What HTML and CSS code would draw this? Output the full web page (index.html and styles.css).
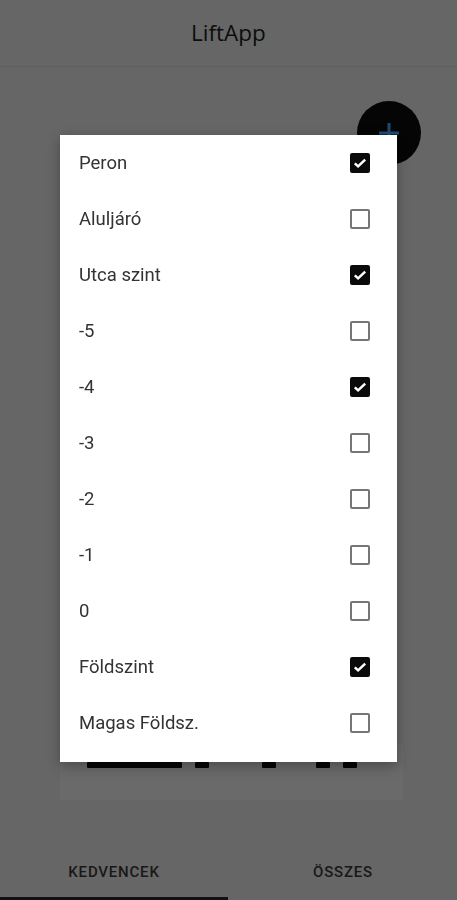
FILE: index.html
```html
<!DOCTYPE html>
<html>

<head>
    <title>LiftApp</title>
    <link rel="stylesheet" href="styles.css">
</head>

<body>

    <div class="topbar">
        <h1>LiftApp</h1>
    </div>

    <div class="content">
        <div class="fab">
            <svg width="22" height="22" viewBox="0 0 22 22">
                <path d="M11 1v20M1 11h20" stroke="#204a72" stroke-width="3" fill="none"/>
            </svg>
        </div>
        <div class="card">
            <div class="bars">
                <span class="bar wide"></span>
                <span class="bar gap1"></span>
                <span class="bar gap2"></span>
                <span class="bar gap3"></span>
                <span class="bar gap4"></span>
            </div>
        </div>
    </div>

    <div class="tabs">
        <div class="tab active">Kedvencek</div>
        <div class="tab">Összes</div>
    </div>

    <div class="dialog">
        <ul id="levelList"></ul>
    </div>

    <script>
        (function () {
            var levels = [
                { name: "Peron", checked: true },
                { name: "Aluljáró", checked: false },
                { name: "Utca szint", checked: true },
                { name: "-5", checked: false },
                { name: "-4", checked: true },
                { name: "-3", checked: false },
                { name: "-2", checked: false },
                { name: "-1", checked: false },
                { name: "0", checked: false },
                { name: "Földszint", checked: true },
                { name: "Magas Földsz.", checked: false }
            ];
            var list = document.getElementById("levelList");
            for (var i = 0; i < levels.length; i++) {
                var li = document.createElement("li");
                var label = document.createElement("span");
                label.className = "label";
                label.textContent = levels[i].name;
                var box = document.createElement("span");
                box.className = levels[i].checked ? "box checked" : "box";
                if (levels[i].checked) {
                    box.innerHTML = '<svg width="16" height="16" viewBox="0 0 16 16"><path d="M2.8 8.3l3.3 3.1L13.2 4.6" stroke="#fff" stroke-width="2.5" fill="none"/></svg>';
                }
                li.appendChild(label);
                li.appendChild(box);
                list.appendChild(li);
            }
        }());
    </script>
</body>

</html>
```

FILE: styles.css
```css
* {
    list-style: none;
    margin: 0;
    padding: 0;
    box-sizing: border-box;
    font-family: Roboto, 'Noto Sans', sans-serif;
}

body {
    background: #666666;
    width: 457px;
    height: 900px;
    display: flex;
    flex-direction: column;
    overflow: hidden;
}

.topbar {
    height: 67px;
    border-bottom: 1px solid #5f5f5f;
    display: flex;
    align-items: center;
    justify-content: center;
}

.topbar h1 {
    font-family: 'Open Sans', sans-serif;
    font-weight: 500;
    font-size: 22.5px;
    color: #0d0d0d;
    margin-bottom: 2px;
}

.content {
    flex: 1;
    position: relative;
    padding-top: 677px;
}

.fab {
    position: absolute;
    left: 357px;
    top: 34px;
    width: 64px;
    height: 64px;
    border-radius: 50%;
    background: #050505;
    display: flex;
    align-items: center;
    justify-content: center;
}

.card {
    margin: 0 54px 0 60px;
    height: 56px;
    background: #6a6a6a;
    padding-top: 18px;
}

.bars {
    display: flex;
    padding-left: 27px;
}

.bar {
    height: 6px;
    width: 14px;
    background: #050505;
    border-radius: 1px;
}

.bar.wide {
    width: 95px;
}

.bar.gap1 {
    margin-left: 13px;
}

.bar.gap2 {
    margin-left: 53px;
}

.bar.gap3 {
    margin-left: 40px;
}

.bar.gap4 {
    margin-left: 13px;
}

.tabs {
    height: 56px;
    display: flex;
}

.tab {
    flex: 1;
    display: flex;
    align-items: center;
    justify-content: center;
    text-transform: uppercase;
    font-size: 15px;
    font-weight: 500;
    letter-spacing: 0.8px;
    color: #181818;
    border-bottom: 3px solid transparent;
    padding-top: 3px;
}

.tab.active {
    border-bottom-color: #111111;
}

.tab:last-child {
    padding-left: 1px;
}

.dialog {
    position: fixed;
    left: 60px;
    top: 135px;
    width: 337px;
    background: #ffffff;
    padding-bottom: 11px;
    box-shadow: 0 4px 12px rgba(0, 0, 0, 0.3);
}

.dialog li {
    height: 56px;
    display: flex;
    align-items: center;
    justify-content: space-between;
    padding: 0 27px 0 19px;
}

.dialog .label {
    font-size: 18.5px;
    color: #333333;
}

.box {
    width: 20px;
    height: 20px;
    border: 2px solid #767676;
    border-radius: 2px;
    display: flex;
    align-items: center;
    justify-content: center;
}

.box.checked {
    background: #0a0a0a;
    border-color: #0a0a0a;
}
```
